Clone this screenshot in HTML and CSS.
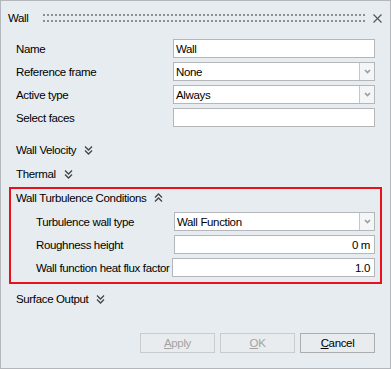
FILE: index.html
```html
<!DOCTYPE html>
<html lang="en">
<head>
    <meta charset="UTF-8">
    <meta name="viewport" content="width=device-width, initial-scale=1.0">
    <title>Wall</title>
    <link rel="stylesheet" href="styles.css">
</head>
<body>

<div class="window">
    <div class="titlebar">
        <span class="title">Wall</span>
        <span class="grip"></span>
        <svg class="close" width="9" height="9" viewBox="0 0 9 9">
            <path d="M0.5 0.5 L8.5 8.5 M8.5 0.5 L0.5 8.5" stroke="#555" stroke-width="1.1" fill="none"/>
        </svg>
    </div>

    <div class="fields">
        <label>Name</label>
        <div class="field"><span class="value">Wall</span></div>

        <label>Reference frame</label>
        <div class="field select">
            <span class="value">None</span>
            <span class="arrow"><svg width="7" height="5" viewBox="0 0 7 5"><path d="M1 1 L3.5 3.5 L6 1" stroke="#9c9c9c" stroke-width="1.6" fill="none"/></svg></span>
        </div>

        <label>Active type</label>
        <div class="field select">
            <span class="value">Always</span>
            <span class="arrow"><svg width="7" height="5" viewBox="0 0 7 5"><path d="M1 1 L3.5 3.5 L6 1" stroke="#9c9c9c" stroke-width="1.6" fill="none"/></svg></span>
        </div>

        <label>Select faces</label>
        <div class="field"><span class="value"></span></div>
    </div>

    <div class="section first">
        Wall Velocity
        <svg class="chevron" width="9" height="10" viewBox="0 0 9 10"><path d="M1 1.5 L4.5 5 L8 1.5 M1 5.5 L4.5 9 L8 5.5" stroke="#444" stroke-width="1.3" fill="none"/></svg>
    </div>
    <div class="section">
        Thermal
        <svg class="chevron" width="9" height="10" viewBox="0 0 9 10"><path d="M1 1.5 L4.5 5 L8 1.5 M1 5.5 L4.5 9 L8 5.5" stroke="#444" stroke-width="1.3" fill="none"/></svg>
    </div>

    <!-- highlighted group -->
    <div class="highlight">
        <div class="section inner">
            Wall Turbulence Conditions
            <svg class="chevron" width="9" height="10" viewBox="0 0 9 10"><path d="M1 4.5 L4.5 1 L8 4.5 M1 8.5 L4.5 5 L8 8.5" stroke="#444" stroke-width="1.3" fill="none"/></svg>
        </div>
        <div class="fields sub">
            <label>Turbulence wall type</label>
            <div class="field select">
                <span class="value">Wall Function</span>
                <span class="arrow"><svg width="7" height="5" viewBox="0 0 7 5"><path d="M1 1 L3.5 3.5 L6 1" stroke="#9c9c9c" stroke-width="1.6" fill="none"/></svg></span>
            </div>

            <label>Roughness height</label>
            <div class="field number"><span class="value">0 m</span></div>

            <label>Wall function heat flux factor</label>
            <div class="field number wide"><span class="value">1.0</span></div>
        </div>
    </div>

    <div class="section after">
        Surface Output
        <svg class="chevron" width="9" height="10" viewBox="0 0 9 10"><path d="M1 1.5 L4.5 5 L8 1.5 M1 5.5 L4.5 9 L8 5.5" stroke="#444" stroke-width="1.3" fill="none"/></svg>
    </div>

    <div class="buttons">
        <button class="btn" disabled><u>A</u>pply</button>
        <button class="btn" disabled><u>O</u>K</button>
        <button class="btn"><u>C</u>ancel</button>
    </div>
</div>

</body>
</html>
```

FILE: styles.css
```css
body {
    margin: 0;
    font-family: "Liberation Sans", Arial, sans-serif;
    font-size: 11.5px;
    letter-spacing: -0.35px;
    color: #000;
}

.window {
    box-sizing: border-box;
    width: 391px;
    height: 369px;
    background-color: #e6ecf0;
    border: 1px solid #b3b7bb;
}

/* Title bar */
.titlebar {
    display: flex;
    align-items: center;
    height: 20px;
    margin-top: 7px;
    padding-left: 7px;
}

.title {
    width: 35px;
}

.grip {
    flex: 1;
    height: 8px;
    margin-right: 7px;
    background-image: linear-gradient(90deg, #8e8e8e 2px, transparent 2px),
                      linear-gradient(90deg, #8e8e8e 2px, transparent 2px);
    background-size: 4px 2px;
    background-repeat: repeat-x;
    background-position: 0 0, 0 6px;
}

.close {
    margin-right: 8px;
}

/* Form rows */
.fields {
    display: grid;
    grid-template-columns: 157px 1fr;
    grid-auto-rows: 19px;
    row-gap: 4px;
    align-items: center;
    margin-top: 11px;
    padding: 0 15px;
}

.fields label {
    white-space: nowrap;
}

.field {
    box-sizing: border-box;
    height: 19px;
    display: flex;
    align-items: center;
    background-color: #fff;
    border: 1px solid #b4b6ba;
}

.field .value {
    flex: 1;
    padding-left: 2px;
}

.field.number .value {
    text-align: right;
    padding-right: 4px;
}

.field.wide {
    margin-left: -2px;
}

.select .arrow {
    box-sizing: border-box;
    width: 15px;
    height: 100%;
    display: flex;
    justify-content: center;
    align-items: center;
    background-color: #f4f5f6;
    border-left: 1px solid #c4c6c9;
}

/* Collapsible section headers */
.section {
    display: flex;
    align-items: center;
    height: 24px;
    padding-left: 15px;
}

.section.first {
    margin-top: 11px;
}

.section.after {
    margin-top: 3px;
}

.chevron {
    margin-left: 8px;
}

.highlight {
    margin: 1px 8px 0;
    padding-bottom: 5px;
    border: 2px solid #e8111c;
}

.highlight .section.inner {
    height: 18px;
    padding-left: 5px;
}

.fields.sub {
    grid-template-columns: 138px 1fr;
    margin-top: 5px;
    padding: 0 5px 0 25px;
}

/* Dialog buttons */
.buttons {
    display: flex;
    justify-content: flex-end;
    gap: 5px;
    margin-top: 22px;
    padding-right: 15px;
}

.btn {
    width: 75px;
    height: 20px;
    padding: 0;
    font-family: inherit;
    font-size: inherit;
    letter-spacing: inherit;
    color: #000;
    background-color: #e8ecef;
    border: 1px solid #adadad;
}

.btn:disabled {
    color: #a3a3a3;
    border-color: #c9cbcd;
}
```
